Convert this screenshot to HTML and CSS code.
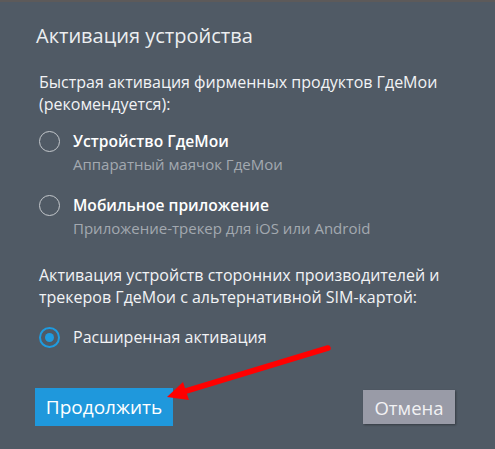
FILE: index.html
```html
<!DOCTYPE html>
<html lang="ru">
<head>
<meta charset="UTF-8" />
<title>Активация устройства</title>
<link rel="stylesheet" href="styles.css">
</head>
<body>

<div class="dialog">
  <h1 class="title">Активация устройства</h1>

  <p class="section">Быстрая активация фирменных продуктов ГдеМои (рекомендуется):</p>

  <label class="option">
    <span class="radio"></span>
    <span class="option-text">
      <span class="option-name">Устройство ГдеМои</span>
      <span class="option-hint">Аппаратный маячок ГдеМои</span>
    </span>
  </label>

  <label class="option">
    <span class="radio"></span>
    <span class="option-text">
      <span class="option-name">Мобильное приложение</span>
      <span class="option-hint">Приложение-трекер для iOS или Android</span>
    </span>
  </label>

  <p class="section section-second">Активация устройств сторонних производителей и трекеров ГдеМои с альтернативной SIM-картой:</p>

  <label class="option option-single">
    <span class="radio checked"></span>
    <span class="option-text">
      <span class="option-name normal">Расширенная активация</span>
    </span>
  </label>

  <div class="buttons">
    <button class="btn btn-primary">Продолжить</button>
    <button class="btn btn-cancel">Отмена</button>
  </div>

  <!-- красная стрелка поверх окна -->
  <svg class="arrow" width="495" height="449" viewBox="0 0 495 449">
    <line x1="328" y1="348" x2="186" y2="391" stroke="#ff0000" stroke-width="5.5" stroke-linecap="round" />
    <polygon points="167,397 183,382 189,400" fill="#ff0000" />
  </svg>
</div>

</body>
</html>
```

FILE: styles.css
```css
html, body {
  margin: 0;
  padding: 0;
}
body {
  font-family: "Open Sans", Arial, sans-serif;
  background: #505a65;
  border-top: 2px solid #5d5a5a;
  width: 495px;
  height: 447px;
  overflow: hidden;
}
.dialog {
  position: relative;
  padding: 21px 36px 0 36px;
}
.title {
  margin: 0;
  font-size: 20px;
  font-weight: normal;
  color: #eceef0;
  line-height: 26px;
}
.section {
  margin: 22px 0 0 3px;
  font-size: 16px;
  font-weight: normal;
  line-height: 22px;
  color: #f2f3f5;
  width: 420px;
}
.section-second {
  margin-top: 24px;
}
.option {
  display: flex;
  align-items: flex-start;
  margin: 15px 0 0 3px;
}
.option + .option {
  margin-top: 18px;
}
.option-single {
  margin-top: 18px;
}
.radio {
  box-sizing: border-box;
  width: 21px;
  height: 21px;
  border: 1.5px solid #c4c8cc;
  border-radius: 50%;
  flex: none;
  margin-top: 1px;
  display: flex;
  align-items: center;
  justify-content: center;
}
.radio.checked {
  border: 2.5px solid #1e9be0;
}
.radio.checked::after {
  content: "";
  width: 9px;
  height: 9px;
  border-radius: 50%;
  background: #1e9be0;
}
.option-text {
  display: flex;
  flex-direction: column;
  margin-left: 13px;
}
.option-name {
  font-size: 15.6px;
  font-weight: 600;
  color: #ffffff;
  line-height: 22px;
}
.option-name.normal {
  font-size: 16px;
  font-weight: normal;
  color: #f2f3f5;
}
.option-hint {
  font-size: 15px;
  color: #a3a9b0;
  line-height: 24px;
}
.buttons {
  display: flex;
  justify-content: space-between;
  align-items: center;
  margin-top: 40px;
  width: 419px;
}
.btn {
  font-family: "Open Sans", Arial, sans-serif;
  border: none;
  color: #ffffff;
  cursor: pointer;
  padding: 0;
}
.btn-primary {
  background: #1f98dc;
  font-size: 19px;
  height: 38px;
  margin-left: -1px;
  width: 138px;
}
.btn-cancel {
  background: #999ba7;
  font-size: 18.5px;
  height: 34px;
  width: 92px;
  color: #f2f2f4;
  box-shadow: 1px 1px 2px rgba(0, 0, 0, 0.35);
}
.arrow {
  position: absolute;
  left: 0;
  top: -2px;
  pointer-events: none;
}
```
